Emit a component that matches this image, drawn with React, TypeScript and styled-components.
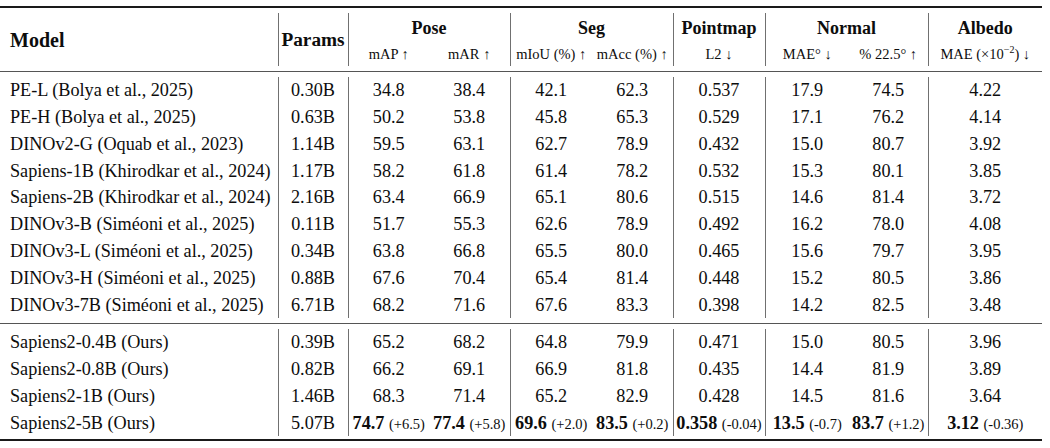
import React from 'react';
import styled, { createGlobalStyle } from 'styled-components';

const GlobalStyle = createGlobalStyle`
  html, body {
    margin: 0;
    padding: 0;
    background: #ffffff;
  }
  #root {
    padding-top: 6px;
  }
`;

type Metric = { value: string; delta: string };

const columns = [278, 70, 81, 81, 82, 81, 92, 84, 79, 114];

// columns that carry a vertical line on their left edge
const dividers = [1, 2, 4, 6, 7, 9];

const baselines: string[][] = [
  ['PE-L (Bolya et al., 2025)', '0.30B', '34.8', '38.4', '42.1', '62.3', '0.537', '17.9', '74.5', '4.22'],
  ['PE-H (Bolya et al., 2025)', '0.63B', '50.2', '53.8', '45.8', '65.3', '0.529', '17.1', '76.2', '4.14'],
  ['DINOv2-G (Oquab et al., 2023)', '1.14B', '59.5', '63.1', '62.7', '78.9', '0.432', '15.0', '80.7', '3.92'],
  ['Sapiens-1B (Khirodkar et al., 2024)', '1.17B', '58.2', '61.8', '61.4', '78.2', '0.532', '15.3', '80.1', '3.85'],
  ['Sapiens-2B (Khirodkar et al., 2024)', '2.16B', '63.4', '66.9', '65.1', '80.6', '0.515', '14.6', '81.4', '3.72'],
  ['DINOv3-B (Siméoni et al., 2025)', '0.11B', '51.7', '55.3', '62.6', '78.9', '0.492', '16.2', '78.0', '4.08'],
  ['DINOv3-L (Siméoni et al., 2025)', '0.34B', '63.8', '66.8', '65.5', '80.0', '0.465', '15.6', '79.7', '3.95'],
  ['DINOv3-H (Siméoni et al., 2025)', '0.88B', '67.6', '70.4', '65.4', '81.4', '0.448', '15.2', '80.5', '3.86'],
  ['DINOv3-7B (Siméoni et al., 2025)', '6.71B', '68.2', '71.6', '67.6', '83.3', '0.398', '14.2', '82.5', '3.48'],
];

const ours: string[][] = [
  ['Sapiens2-0.4B (Ours)', '0.39B', '65.2', '68.2', '64.8', '79.9', '0.471', '15.0', '80.5', '3.96'],
  ['Sapiens2-0.8B (Ours)', '0.82B', '66.2', '69.1', '66.9', '81.8', '0.435', '14.4', '81.9', '3.89'],
  ['Sapiens2-1B (Ours)', '1.46B', '68.3', '71.4', '65.2', '82.9', '0.428', '14.5', '81.6', '3.64'],
];

const best: Metric[] = [
  { value: '74.7', delta: '(+6.5)' },
  { value: '77.4', delta: '(+5.8)' },
  { value: '69.6', delta: '(+2.0)' },
  { value: '83.5', delta: '(+0.2)' },
  { value: '0.358', delta: '(-0.04)' },
  { value: '13.5', delta: '(-0.7)' },
  { value: '83.7', delta: '(+1.2)' },
  { value: '3.12', delta: '(-0.36)' },
];

const groups = [
  { name: 'Pose', span: 2 },
  { name: 'Seg', span: 2 },
  { name: 'Pointmap', span: 1 },
  { name: 'Normal', span: 2 },
  { name: 'Albedo', span: 1 },
];

const subHeads = ['mAP ↑', 'mAR ↑', 'mIoU (%) ↑', 'mAcc (%) ↑', 'L2 ↓', 'MAE° ↓', '% 22.5° ↑'];

const Table = styled.table`
  width: 1042px;
  table-layout: fixed;
  border-collapse: collapse;
  border-spacing: 0;
  font-family: 'Liberation Serif', 'Times New Roman', serif;
  color: #0d0d0d;
`;

const RuleCell = styled.td<{ $above: number; $below: number }>`
  padding: ${(p) => p.$above}px 0 ${(p) => p.$below}px;
  line-height: 0;
  font-size: 0;
`;

const Line = styled.div<{ $weight: number; $color: string }>`
  height: ${(p) => p.$weight}px;
  background: ${(p) => p.$color};
`;

const Cell = styled.td<{ $align?: 'left' | 'center'; $divider?: boolean }>`
  height: 26.8px;
  padding: 0 0 0 ${(p) => (p.$align === 'left' ? '10px' : '0')};
  text-align: ${(p) => p.$align ?? 'center'};
  vertical-align: middle;
  font-size: 18.2px;
  line-height: 1;
  white-space: nowrap;
  border-left: ${(p) => (p.$divider ? '1px solid #707070' : 'none')};
`;

const HeadCell = styled(Cell)<{ $size?: number }>`
  height: auto;
  font-size: ${(p) => p.$size ?? 20}px;
  font-weight: bold;
`;

const GroupCell = styled.td<{ $divider?: boolean }>`
  height: 30px;
  padding: 0;
  text-align: center;
  vertical-align: middle;
  font-size: 18px;
  font-weight: bold;
  line-height: 1;
  border-left: ${(p) => (p.$divider ? '1px solid #707070' : 'none')};
`;

const SubCell = styled.td<{ $divider?: boolean }>`
  height: 23px;
  padding: 0;
  text-align: center;
  vertical-align: middle;
  font-size: 14.5px;
  line-height: 1;
  white-space: nowrap;
  border-left: ${(p) => (p.$divider ? '1px solid #707070' : 'none')};
`;

const Sup = styled.sup`
  font-size: 10px;
  line-height: 0;
`;

const Best = styled.b`
  font-weight: bold;
`;

const Delta = styled.span`
  font-size: 14.5px;
`;

const Rule = ({
  weight,
  above = 0,
  below = 0,
  color = '#1a1a1a',
}: {
  weight: number;
  above?: number;
  below?: number;
  color?: string;
}) => (
  <tr>
    <RuleCell colSpan={columns.length} $above={above} $below={below}>
      <Line $weight={weight} $color={color} />
    </RuleCell>
  </tr>
);

const DataRow = ({ cells }: { cells: string[] }) => (
  <tr>
    {cells.map((c, i) => (
      <Cell key={i} $align={i === 0 ? 'left' : 'center'} $divider={dividers.includes(i)}>
        {c}
      </Cell>
    ))}
  </tr>
);

export default function App() {
  return (
    <>
      <GlobalStyle />
      <Table>
        <colgroup>
          {columns.map((w, i) => (
            <col key={i} style={{ width: w }} />
          ))}
        </colgroup>
        <tbody>
          <Rule weight={2} below={5} />

          <tr>
            <HeadCell rowSpan={2} $align='left'>Model</HeadCell>
            <HeadCell rowSpan={2} $size={19.3} $divider>Params</HeadCell>
            {groups.map((g) => (
              <GroupCell key={g.name} colSpan={g.span} $divider>
                {g.name}
              </GroupCell>
            ))}
          </tr>
          <tr>
            {subHeads.map((s, i) => (
              <SubCell key={s} $divider={dividers.includes(i + 2)}>
                {s}
              </SubCell>
            ))}
            <SubCell $divider>
              MAE (×10<Sup>−2</Sup>) ↓
            </SubCell>
          </tr>

          <Rule weight={1} above={5} below={5} color='#555' />

          {baselines.map((r) => (
            <DataRow key={r[0]} cells={r} />
          ))}

          <Rule weight={1} above={5} below={5} color='#555' />

          {ours.map((r) => (
            <DataRow key={r[0]} cells={r} />
          ))}
          <tr>
            <Cell $align='left'>Sapiens2-5B (Ours)</Cell>
            <Cell $divider>5.07B</Cell>
            {best.map((m, i) => (
              <Cell key={i} $divider={dividers.includes(i + 2)}>
                <Best>{m.value}</Best> <Delta>{m.delta}</Delta>
              </Cell>
            ))}
          </tr>

          <Rule weight={2} above={3} />
        </tbody>
      </Table>
    </>
  );
}
